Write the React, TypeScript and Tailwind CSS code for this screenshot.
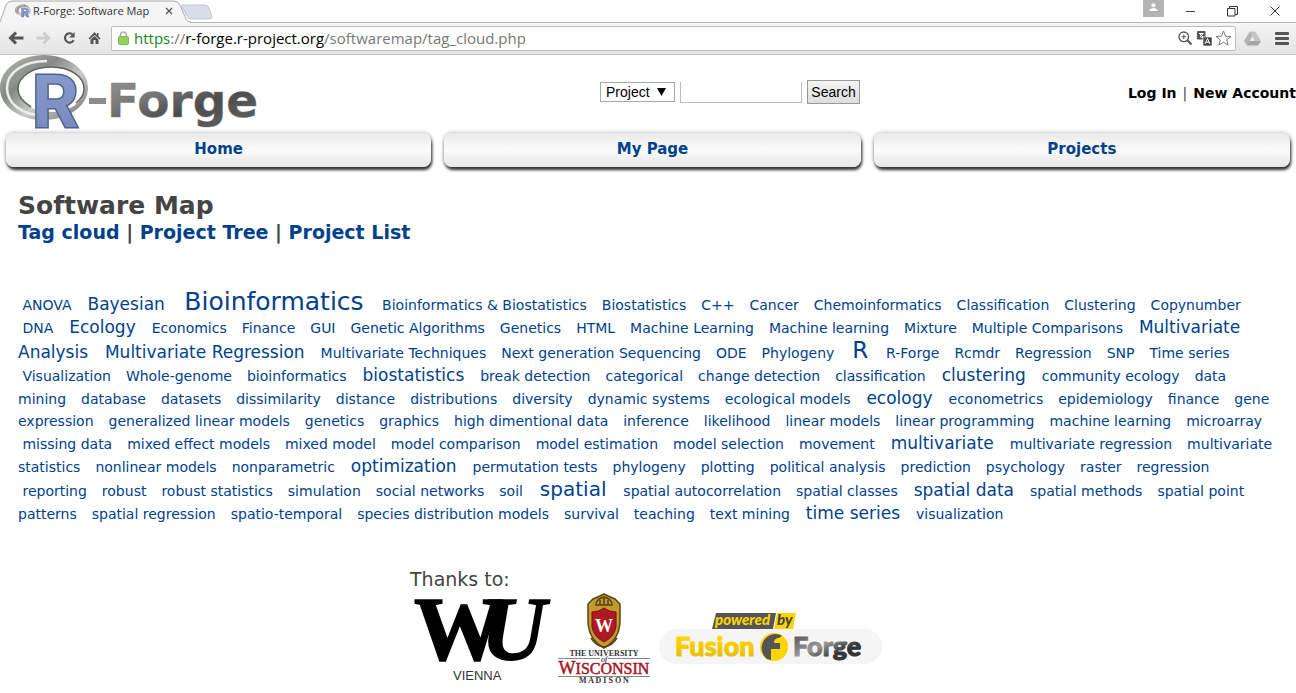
import React from "react";

/* Newlines mark where the cloud breaks its rows. */
const TAGS: [string, number?][] = [
  ["ANOVA"], ["Bayesian", 2], ["Bioinformatics", 5], ["Bioinformatics & Biostatistics"], ["Biostatistics"], ["C++"], ["Cancer"],
  ["Chemoinformatics"], ["Classification"], ["Clustering"], ["Copynumber"], ["\nDNA"], ["Ecology", 2], ["Economics"], ["Finance"],
  ["GUI"], ["Genetic Algorithms"], ["Genetics"], ["HTML"], ["Machine Learning"], ["Machine learning"], ["Mixture"],
  ["Multiple Comparisons"], ["Multivariate\nAnalysis", 2], ["Multivariate Regression", 2], ["Multivariate Techniques"],
  ["Next generation Sequencing"], ["ODE"], ["Phylogeny"], ["R", 4], ["R-Forge"], ["Rcmdr"], ["Regression"], ["SNP"],
  ["Time series"], ["\nVisualization"], ["Whole-genome"], ["bioinformatics"], ["biostatistics", 2], ["break detection"],
  ["categorical"], ["change detection"], ["classification"], ["clustering", 2], ["community ecology"], ["data\nmining"],
  ["database"], ["datasets"], ["dissimilarity"], ["distance"], ["distributions"], ["diversity"], ["dynamic systems"],
  ["ecological models"], ["ecology", 2], ["econometrics"], ["epidemiology"], ["finance"], ["gene\nexpression"],
  ["generalized linear models"], ["genetics"], ["graphics"], ["high dimentional data"], ["inference"], ["likelihood"],
  ["linear models"], ["linear programming"], ["machine learning"], ["microarray"], ["\nmissing data"], ["mixed effect models"],
  ["mixed model"], ["model comparison"], ["model estimation"], ["model selection"], ["movement"], ["multivariate", 2],
  ["multivariate regression"], ["multivariate\nstatistics"], ["nonlinear models"], ["nonparametric"], ["optimization", 2],
  ["permutation tests"], ["phylogeny"], ["plotting"], ["political analysis"], ["prediction"], ["psychology"], ["raster"],
  ["regression"], ["\nreporting"], ["robust"], ["robust statistics"], ["simulation"], ["social networks"], ["soil"],
  ["spatial", 3], ["spatial autocorrelation"], ["spatial classes"], ["spatial data", 2], ["spatial methods"],
  ["spatial point\npatterns"], ["spatial regression"], ["spatio-temporal"], ["species distribution models"], ["survival"],
  ["teaching"], ["text mining"], ["time series", 2], ["visualization"],
];

const SIZES: Record<number, string> = {
  1: "mr-px text-[14px]",
  2: "mr-px text-[17px]",
  3: "mr-px text-[20px]",
  4: "mr-px text-[23px]",
  5: "mr-px text-[25px]",
};

function Tag({ name, size }: { name: string; size: number }) {
  const label = name.trim();
  const [first, second] = label.split("\n");
  return (
    <>
      {name.startsWith("\n") && <br />}
      <a href={"#" + encodeURIComponent(label)} className={SIZES[size]}>
        {second ? (
          <>
            <span>{"\u00a0" + first}</span>
            <br />
            <span>{second + "\u00a0"}</span>
          </>
        ) : (
          "\u00a0" + first + "\u00a0"
        )}
      </a>{" "}
    </>
  );
}

function RMark({ className }: { className: string }) {
  return (
    <svg viewBox="0 0 90 74" className={className} aria-hidden="true">
      <defs>
        <linearGradient id="ring" x1="0" y1="0" x2="1" y2="1">
          <stop offset="0" stopColor="#b9bcb8" />
          <stop offset=".35" stopColor="#858983" />
          <stop offset=".6" stopColor="#c9cbc8" />
          <stop offset="1" stopColor="#6c706b" />
        </linearGradient>
        <linearGradient id="blue" x1="0" y1="0" x2="0" y2="1">
          <stop offset="0" stopColor="#8a9dcc" />
          <stop offset="1" stopColor="#7488bd" />
        </linearGradient>
      </defs>
      <path fillRule="evenodd" fill="url(#ring)" d="M44 0C68 0 88 15 88 33S68 65 44 65 0 52 0 33 20 0 44 0ZM51 12C32 12 18 22 18 34s14 23 33 23 33-10 33-23S70 12 51 12Z" />
      <path fill="none" stroke="#eceeea" strokeWidth="2.500" d="M45 61C22 60 7 49 7 33S24 6 47 6" />
      <path fill="none" stroke="#5e625d" strokeWidth="1.500" d="M51 12C32 12 18 22 18 34c0 7 5 13 13 18M51 12c19 0 33 9 33 22 0 5-3 10-8 14" />
      <text x="32" y="72" fontFamily="Roboto, sans-serif" fontWeight="700" fontSize="73" fill="url(#blue)" stroke="#4f618f" strokeWidth="3" paintOrder="stroke">R</text>
    </svg>
  );
}

function ForgeLogo() {
  return (
    <a href="#home" aria-label="R-Forge" className="flex shrink-0">
      <svg width="260" height="76" viewBox="0 0 260 76" aria-hidden="true">
        <defs>
          <linearGradient id="steel" x1="0" y1="0" x2="1" y2="1">
            <stop offset="0" stopColor="#999" />
            <stop offset=".35" stopColor="#777" />
            <stop offset=".6" stopColor="#4c4c4c" />
            <stop offset="1" stopColor="#666" />
          </linearGradient>
        </defs>
        <svg x="0" y="0" width="90" height="74"><RMark className="size-full" /></svg>
        <rect x="89" y="43" width="17" height="6" fill="#8b8b8b" />
        <text x="107" y="62" fontFamily="DejaVu Sans, sans-serif" fontWeight="700" fontSize="47" fill="url(#steel)" stroke="#666" strokeOpacity=".35">Forge</text>
      </svg>
    </a>
  );
}

function BrowserChrome() {
  const icon = "block shrink-0";
  return (
    <div className="font-['Open_Sans',sans-serif]">
      <div className="flex h-[22px] items-stretch justify-between bg-white">
        <div className="relative flex flex-1">
          <svg className="absolute inset-0" width="216" height="23" aria-hidden="true">
            <path d="M182 5h23q3 0 4 3l3 9q0 2-3 2h-18q-3 0-4-3l-5-9q0-2 0-2Z" fill="#d8dee8" stroke="#c3c8cf" />
            <path d="M0 22 6 5q2-4 6-4h162q4 0 6 4l6 14q1 3 5 3h-1v1H0Z" fill="#f5f5f5" />
            <path d="M0 22 6 5q2-4 6-4h162q4 0 6 4l6 14q1 3 5 3" fill="none" stroke="#aaa" />
          </svg>
          <div className="relative flex items-center pl-[15px]">
            <RMark className="h-3.5 w-4" />
            <span className="ml-0.5 w-[132px] text-[11px] text-[#333]">R-Forge: Software Map</span>
            <button aria-label="Close tab" className="block">
              <svg width="8" height="8" viewBox="0 0 8 8" stroke="#555" strokeWidth="1.3"><path d="M1 1l6 6M7 1 1 7" /></svg>
            </button>
          </div>
        </div>
        <div className="flex items-start">
          <button aria-label="User" className="mr-[22px] flex h-[17px] w-[21px] justify-center bg-[#b3b3b3] pt-[3px]">
            <svg width="9" height="9" viewBox="0 0 9 9" fill="#fff"><circle cx="4.500" cy="2.200" r="2" /><path d="M.5 8V6.500Q4.500 3.500 8.500 6.500V8Z" /></svg>
          </button>
          <button aria-label="Minimize" className="mr-8 pt-[11px]"><svg width="9" height="2"><path d="M0 .5h9" stroke="#444" /></svg></button>
          <button aria-label="Restore" className="mr-8 pt-1.5">
            <svg width="11" height="11" viewBox="0 0 11 11" fill="none" stroke="#333"><path d="M.5 2.500h7.500v7.500H.5ZM2.500 2.500v-2h8v8H8" /></svg>
          </button>
          <button aria-label="Close" className="mr-4 pt-1.5"><svg width="10" height="10" viewBox="0 0 10 10" stroke="#333"><path d="M.5.5l9 9M9.500.5l-9 9" /></svg></button>
        </div>
      </div>
      <div className="flex h-[33px] items-center border-t border-b border-t-[#b5b5b5] border-b-[#c4c4c4] bg-linear-to-b from-[#f5f5f5] to-[#e4e4e4] pb-px pl-2">
        <button aria-label="Back" className="mr-3">
          <svg className={icon} width="16" height="14" viewBox="0 0 16 14" fill="none" stroke="#555" strokeWidth="3"><path d="M15.500 7H3M8 1.500 2.500 7 8 12.500" /></svg>
        </button>
        <button aria-label="Forward" className="mr-3">
          <svg className={icon} width="15" height="14" viewBox="0 0 16 14" fill="none" stroke="#ccc" strokeWidth="3"><path d="M.5 7H13M8 1.500 13.500 7 8 12.500" /></svg>
        </button>
        <button aria-label="Reload" className="mr-3">
          <svg className={icon} width="13" height="14" viewBox="0 0 14 14"><path d="M11.500 9.500A5 5 0 1 1 10 2.800" fill="none" stroke="#555" strokeWidth="2.300" /><path d="M12.500.5v6h-6Z" fill="#555" /></svg>
        </button>
        <button aria-label="Home page" className="mr-2.5">
          <svg className={icon} width="13" height="14" viewBox="0 0 12 14" fill="#555"><path d="M6 1 0 7.500l1 1L6 4l5 4.500 1-1-2-2V2H8.500v2ZM2 8.500V13h3V9h2v4h3V8.500L6 5Z" /></svg>
        </button>
        <div className="flex h-[25px] flex-1 items-center rounded-[2px] border border-[#bdbdbd] bg-white pl-1.5">
          <svg className={icon} width="11" height="14" viewBox="0 0 11 14"><path d="M2.500 6V4a3 3 0 0 1 6 0v2" fill="none" stroke="#b0b0b0" strokeWidth="1.600" /><rect x=".5" y="5.500" width="10" height="8" rx="1" fill="#8fd35f" stroke="#7bbd4b" /></svg>
          <span className="ml-[5px] flex-1 text-[15px] leading-5 whitespace-nowrap text-[#777]">
            <span className="text-[#128a12]">https</span>://<span className="text-black">r-forge.r-project.org</span>/softwaremap/tag_cloud.php
          </span>
          <button aria-label="Zoom">
            <svg className={icon} width="14" height="14" viewBox="0 0 14 14" fill="none" stroke="#555"><circle cx="5.800" cy="5.800" r="4.800" strokeWidth="1.300" /><path d="M3.500 5.800h4.600M5.800 3.500v4.600" /><path d="m9.500 9.500 4 4" strokeWidth="2" /></svg>
          </button>
          <button aria-label="Translate" className="ml-[5px]">
            <svg className={icon} width="15" height="15" viewBox="0 0 15 15"><rect x="0" y="0" width="8.500" height="8.500" rx="1" fill="#555" /><path d="M2 2.500h4.500L3 5.500 6.500 7M3 3l3 3" stroke="#fff" fill="none" /><rect x="6" y="6" width="9" height="9" rx="1" fill="#444" stroke="#fff" strokeWidth=".6" /><path d="m8 13 2.500-5.500L13 13M9 11.200h3" stroke="#fff" fill="none" /></svg>
          </button>
          <button aria-label="Bookmark" className="mr-[3px] ml-[3px]">
            <svg className={icon} width="17" height="16" viewBox="0 0 17 16" fill="#fff" stroke="#777"><path d="m8.500 1 2 5.200 5.500.3-4.300 3.400 1.500 5.300-4.700-3-4.700 3 1.500-5.300L1 6.500l5.500-.3Z" /></svg>
          </button>
        </div>
        <button aria-label="Drive" className="ml-2">
          <svg className={icon} width="17" height="15" viewBox="0 0 17 15"><path d="M5.700.5h5.600L17 10H11Z" fill="#c4c4c4" /><path d="M5.700.5 0 10l3 4.500L8.500 5Z" fill="#b4b4b4" /><path d="M5.500 10H17l-3 4.500H3Z" fill="#a5a5a5" /></svg>
        </button>
        <button aria-label="Menu" className="mr-[7px] ml-3.5">
          <svg className={icon} width="14" height="13" viewBox="0 0 14 13" fill="#555"><rect width="14" height="3" rx="1" /><rect y="5" width="14" height="3" rx="1" /><rect y="10" width="14" height="3" rx="1" /></svg>
        </button>
      </div>
    </div>
  );
}

const NAV = "flex h-[34px] items-center justify-center rounded-[8px] bg-linear-to-b from-[#e9e9e9] via-[#fbfbfb] to-[#e6e6e6] pb-0.5 shadow-[1px_3px_3px_#333,0_0_4px_#aaa]";

export default function App() {
  return (
    <div className="min-h-screen overflow-x-hidden bg-white font-['DejaVu_Sans',sans-serif]">
      <BrowserChrome />
      <header className="flex h-[78px] items-start">
        <ForgeLogo />
        <form className="ml-[340px] flex items-center gap-[5px] pt-[25px] font-['Liberation_Sans',Arial,sans-serif] text-[14px]" onSubmit={(e) => e.preventDefault()}>
          <div className="relative flex items-center">
            <select aria-label="Search in" className="h-5 w-[75px] appearance-none rounded-none border border-[#a9a9a9] bg-white pl-[5px] leading-4">
              <option>Project</option>
            </select>
            <svg className="pointer-events-none absolute right-[9px]" width="9" height="8" aria-hidden="true"><path d="M0 0h9L4.500 8Z" /></svg>
          </div>
          <input type="text" aria-label="Search words" className="h-[21px] w-[122px] border border-t-0 border-[#bbb] px-1" />
          <button className="h-6 w-[53px] border border-[#999] bg-linear-to-b from-[#f4f4f4] to-[#dedede]">Search</button>
        </form>
        <div className="ml-auto pt-7 text-[14px] leading-5 whitespace-nowrap">
          <a href="#login" className="font-bold">Log In</a>
          <span className="mx-1.5 text-[#444]">|</span>
          <a href="#account" className="font-bold">New Account</a>
        </div>
      </header>
      <nav className="grid grid-cols-[426fr_417fr_417fr] gap-x-[13px] pr-1.5 pl-1.5 text-[15px] font-bold text-[#00418c]">
        <a href="#home" className={NAV}>Home</a>
        <a href="#mypage" className={NAV}>My Page</a>
        <a href="#projects" className={NAV}>Projects</a>
      </nav>
      <main className="pt-6 pl-[18px]">
        <h1 className="text-[25px] leading-[30px] font-bold text-[#444]">Software Map</h1>
        <h2 className="text-[19px] leading-[22px] font-bold text-[#444]">
          <a href="#cloud" className="text-[#00418c]">Tag cloud</a> | <a href="#tree" className="text-[#00418c]">Project Tree</a> | <a href="#list" className="text-[#00418c]">Project List</a>
        </h2>
        <div className="mt-12 text-[16px] leading-[22px] text-[#00418c]">
          {TAGS.map(([name, size = 1]) => (
            <Tag key={name} name={name} size={size} />
          ))}
        </div>
      </main>
      <footer className="mt-[42px] ml-[410px]">
        <p className="text-[19px] leading-[25px] text-[#444]">Thanks to:</p>
        <div className="flex items-start">
          <svg width="145" height="96" viewBox="0 0 145 96" role="img" aria-label="WU Vienna">
            <g fontFamily="Liberation Serif, serif" fontWeight="700" fontSize="90" stroke="#000" strokeWidth="1.500">
              <text x="4" y="68">W</text>
              <text x="71" y="68" fontStyle="italic">U</text>
            </g>
            <text x="43" y="88" fontFamily="Liberation Sans, sans-serif" fontSize="13" fill="#333">VIENNA</text>
          </svg>
          <svg width="100" height="96" viewBox="0 0 100 96" role="img" aria-label="The University of Wisconsin Madison">
            <path d="M49 2q6 3 11 5l5 5v18q-1 18-16 26-15-8-16-26V12l5-5q5-2 11-5Z" fill="#c59a2d" stroke="#594515" strokeWidth="1.500" />
            <path d="M41 13q0-6 8-8 8 2 8 8ZM45 13V8M49 13V5M53 13V8M36 46q5 8 13 9 8-1 13-9" fill="none" stroke="#54431b" strokeWidth="1.500" />
            <path d="M49 16q5 4 12 4v15q-2 10-12 15-10-5-12-15V20q7 0 12-4Z" fill="#b01923" stroke="#751018" />
            <text x="49" y="40" textAnchor="middle" fontFamily="Liberation Serif, serif" fontWeight="700" fontSize="18" fill="#fff">W</text>
            <g textAnchor="middle" fontFamily="Liberation Serif, serif">
              <text x="49" y="64" fontSize="8" fontWeight="700" fill="#333">THE UNIVERSITY</text>
              <text x="49" y="70" fontSize="8" fontStyle="italic">of</text>
              <text x="49" y="82" fontSize="18" fill="#a51825" stroke="#a51825" strokeWidth=".5"><tspan>W</tspan><tspan fontSize="16">ISCONSIN</tspan></text>
              <text x="49" y="91" fontSize="8" fontWeight="700" fill="#333">M A D I S O N</text>
            </g>
            <path d="M3 66.500h42M53 66.500h42M3 84.500h92" stroke="#888" />
          </svg>
          <svg className="mt-4 ml-1" width="224" height="62" viewBox="0 0 224 62" role="img" aria-label="Powered by FusionForge">
            <defs>
              <linearGradient id="gold" x1="0" y1="0" x2="0" y2="1"><stop offset=".3" stopColor="#ffd400" /><stop offset="1" stopColor="#dfb800" /></linearGradient>
              <linearGradient id="dark" x1="0" y1="0" x2="1" y2="1"><stop offset="0" stopColor="#444" /><stop offset=".45" stopColor="#999" /><stop offset=".7" stopColor="#333" /></linearGradient>
            </defs>
            <rect y="21" width="223" height="35" rx="17.500" fill="#f5f5f5" />
            <path d="M57 5h60l-3 16H53Z" fill="#555" /><path d="M118 5h19l-3 16h-19Z" fill="#ffd400" />
            <g fontFamily="Lato, sans-serif" fontWeight="900" fontStyle="italic" fontSize="15"><text x="56" y="17" fill="#ffd400">powered</text><text x="118" y="17" fill="#444">by</text></g>
            <g fontFamily="Lato, sans-serif" fontWeight="900" fontSize="27" strokeWidth="1" strokeLinejoin="round"><text x="16" y="48" fill="url(#gold)" stroke="url(#gold)">Fusion</text><text x="134" y="48" fill="url(#dark)" stroke="url(#dark)">Forge</text></g>
            <circle cx="115" cy="39" r="14" fill="#ffd400" />
            <path d="M108 51A14 14 0 0 1 123 27.500L120 30q-5 0-5 5h6v6h-9v11Z" fill="#555" />
          </svg>
        </div>
      </footer>
    </div>
  );
}
